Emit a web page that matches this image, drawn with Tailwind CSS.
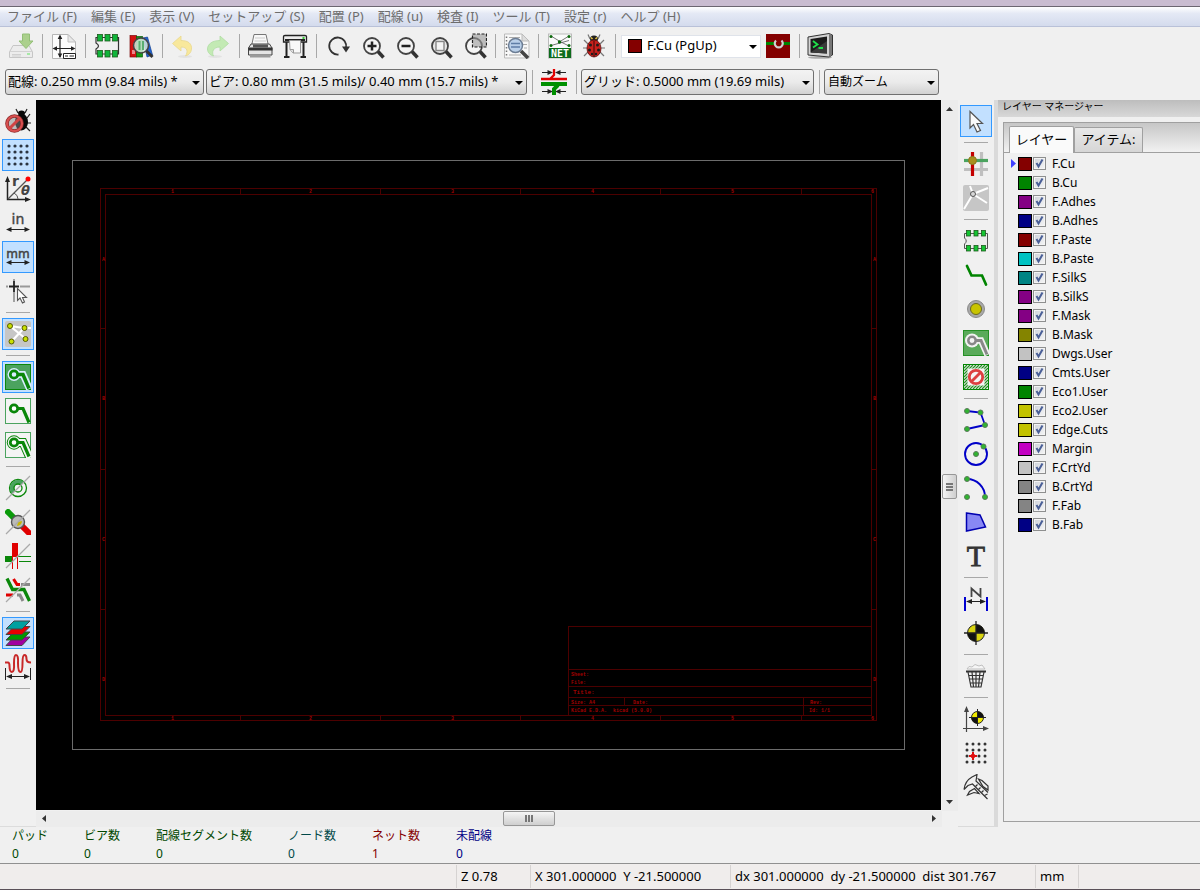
<!DOCTYPE html>
<html lang="ja">

<head>
  <meta charset="UTF-8">
  <meta name="viewport" content="width=device-width, initial-scale=1.0">
  <title>Pcbnew</title>
  <script src="https://cdn.jsdelivr.net/npm/@tailwindcss/browser@4"></script>
</head>

<body class="h-screen flex flex-col overflow-hidden bg-[#f0f0f0] text-black text-[13px] leading-4 font-['Noto_Sans','Noto_Sans_CJK_JP',sans-serif]">
  <!-- Window frame -->
  <div class="h-[7px] shrink-0 bg-[#c9bcd0] border-b border-[#6b6670]"></div>

  <!-- Menu bar -->
  <nav class="h-5 shrink-0 flex items-center gap-[14px] px-[7px] pb-[2px] whitespace-nowrap text-[#6d6d6d] bg-linear-to-b from-white via-[#e4e9f5] via-35% to-[#d4dbed] border-b border-[#b9c1d8]">
    <a href="#">ファイル (F)</a>
    <a href="#">編集 (E)</a>
    <a href="#">表示 (V)</a>
    <a href="#">セットアップ (S)</a>
    <a href="#">配置 (P)</a>
    <a href="#">配線 (u)</a>
    <a href="#">検査 (I)</a>
    <a href="#">ツール (T)</a>
    <a href="#">設定 (r)</a>
    <a href="#">ヘルプ (H)</a>
  </nav>

  <!-- Main toolbar -->
  <div class="h-[38px] shrink-0 flex items-center pl-1">
    <button class="w-[34px] h-[34px] grid place-items-center" aria-label="保存">
      <svg width="26" height="26" viewBox="0 0 26 26">
        <path d="M5 12.500H21L24.500 19V24.500H1.500V19Z" fill="#ececec" stroke="#c6c6c6"/>
        <path d="M1.500 18.500H24.500" stroke="#d2d2d2"/>
        <path d="M4 21.500H13M4 23H13" stroke="#d0d0d0"/>
        <rect x="19" y="20" width="3" height="2" fill="#a6e8a6"/>
        <path d="M14.500 1H21.500V8H25L18 15.500L11 8H14.500Z" fill="#abd08c" stroke="#93bf77"/>
      </svg>
    </button>
    <i class="w-[9px] h-6 flex justify-center"><b class="w-px h-6 bg-[#a8a8a8]"></b></i>
    <button class="w-[34px] h-[34px] grid place-items-center" aria-label="ページ設定">
      <svg width="26" height="26" viewBox="0 0 26 26">
        <path d="M1.500 1.500H17L24.500 9V25.500H1.500Z" fill="#fcfcfc" stroke="#b5b5b5"/>
        <path d="M17 1.500V9H24.500Z" fill="#e8e8e8" stroke="#c0c0c0"/>
        <path d="M9 3V24M3 15.500H23" stroke="#222" stroke-width="1.200"/>
        <path d="M9 1.500L6.700 6H11.300ZM9 25L6.700 20.500H11.300ZM1.500 15.500L6 13.200V17.800ZM24.500 15.500L20 13.200V17.800Z" fill="#222"/>
        <path d="M12.500 20.500H24.500V25.500H12.500Z" fill="#fff" stroke="#222"/>
        <path d="M14 23H17M18.500 23H23" stroke="#222"/>
      </svg>
    </button>
    <i class="w-[9px] h-6 flex justify-center"><b class="w-px h-6 bg-[#a8a8a8]"></b></i>
    <button class="w-[34px] h-[34px] grid place-items-center" aria-label="フットプリントエディター">
      <svg width="26" height="26" viewBox="0 0 26 26">
        <path d="M2 4.500H24.500V21H2V16Q7 13 2 10Z" fill="#f0f0f0" stroke="#333" stroke-width="1.200"/>
        <g fill="#0fb53a" stroke="#1c5a1c" stroke-width=".8">
          <rect x="3.500" y="1.500" width="5" height="6.500"/><rect x="11" y="1.500" width="5" height="6.500"/><rect x="18.500" y="1.500" width="5" height="6.500"/>
          <rect x="3.500" y="17.500" width="5" height="6.500"/><rect x="11" y="17.500" width="5" height="6.500"/><rect x="18.500" y="17.500" width="5" height="6.500"/>
        </g>
      </svg>
    </button>
    <button class="w-[34px] h-[34px] grid place-items-center" aria-label="ライブラリブラウザー">
      <svg width="26" height="26" viewBox="0 0 26 26">
        <rect x="2" y="2.500" width="6.500" height="21.500" fill="#d31212" stroke="#7b0c0c" stroke-width=".7"/>
        <rect x="8.500" y="3.500" width="6" height="20.500" fill="#169a16" stroke="#0b5c0b" stroke-width=".7"/>
        <path d="M15 5L19.500 4L24.500 22L19 24Z" fill="#1d62d6" stroke="#123f8c" stroke-width=".7"/>
        <path d="M4 18H7M4 20H7" stroke="#fff"/>
        <circle cx="13" cy="12.500" r="7.500" fill="#d5e8dc" fill-opacity=".85" stroke="#444" stroke-width="1.500"/>
        <path d="M11.500 8V17M15 8V17" fill="none" stroke="#5aae72" stroke-width="2"/>
        <path d="M18.500 18L24.500 24" stroke="#333" stroke-width="3"/>
      </svg>
    </button>
    <i class="w-[9px] h-6 flex justify-center"><b class="w-px h-6 bg-[#a8a8a8]"></b></i>
    <button class="w-[34px] h-[34px] grid place-items-center" aria-label="元に戻す">
      <svg width="26" height="26" viewBox="0 0 26 26">
        <ellipse cx="14" cy="23.500" rx="7" ry="1.500" fill="#e2e2e2"/>
        <path d="M1.500 10.500L10 3V7.500C17.500 7.500 21 11 20.500 16C20.200 19.500 18 22 14.500 23C17 19 17 14 10 14V18Z" fill="#f8e89c" stroke="#e8d88e" stroke-width=".8"/>
      </svg>
    </button>
    <button class="w-[34px] h-[34px] grid place-items-center" aria-label="やり直す">
      <svg width="26" height="26" viewBox="0 0 26 26">
        <ellipse cx="10" cy="23.500" rx="7" ry="1.500" fill="#e2e2e2"/>
        <path d="M23.500 10.500L15 3V7.500C7.500 7.500 2.500 11 2.500 16C2.500 19.500 5 22 8.500 23C6.500 19 8 14 15 14V18Z" fill="#c3eab4" stroke="#aedca2" stroke-width=".8"/>
      </svg>
    </button>
    <i class="w-[9px] h-6 flex justify-center"><b class="w-px h-6 bg-[#a8a8a8]"></b></i>
    <button class="w-[34px] h-[34px] grid place-items-center" aria-label="印刷">
      <svg width="26" height="26" viewBox="0 0 26 26">
        <path d="M6 1.500H18L20.500 13H3.500Z" fill="#f8f8f8" stroke="#777"/>
        <path d="M7 5H17M6.500 8H18" stroke="#ccc"/>
        <path d="M3 11H21.500L24 15V22H.500V15Z" fill="#e4e4e4" stroke="#444"/>
        <path d="M.500 14.500H24.500V17.500H.500Z" fill="#333"/>
        <path d="M5 11.500H20V14.500H5Z" fill="#555"/>
        <path d="M2 22H22.500V24.500H2Z" fill="#9a9a9a"/>
      </svg>
    </button>
    <button class="w-[34px] h-[34px] grid place-items-center" aria-label="プロット">
      <svg width="26" height="26" viewBox="0 0 26 26">
        <path d="M1.500 3.500Q1.500 2.500 3 2.500H23Q24.500 2.500 24.500 3.500V9H1.500Z" fill="#ececec" stroke="#222" stroke-width="1.300"/>
        <path d="M3 7H23" stroke="#222" stroke-width="2"/>
        <rect x="20.500" y="4" width="2" height="2" fill="#3c3"/>
        <path d="M4.500 9V24M21.500 9V24" stroke="#222" stroke-width="2"/>
        <path d="M2 24H7.500M18.500 24H24" stroke="#222" stroke-width="2"/>
        <path d="M7.500 7.500H18.500V20H11L8 16.500Z" fill="#f8f8f8" stroke="#999"/>
        <path d="M8 16.500H11.500V20" fill="#ddd" stroke="#999"/>
      </svg>
    </button>
    <i class="w-[9px] h-6 flex justify-center"><b class="w-px h-6 bg-[#a8a8a8]"></b></i>
    <button class="w-[34px] h-[34px] grid place-items-center" aria-label="再描画">
      <svg width="26" height="26" viewBox="0 0 26 26">
        <path d="M13.500 21.500A8.500 8.500 0 1 1 21 15" fill="none" stroke="#333" stroke-width="1.800"/>
        <path d="M17 13.500H25L21 19.500Z" fill="#333"/>
      </svg>
    </button>
    <button class="w-[34px] h-[34px] grid place-items-center" aria-label="拡大">
      <svg width="26" height="26" viewBox="0 0 26 26">
        <circle cx="13" cy="13" r="8" fill="#f4f4f4" stroke="#444" stroke-width="1.800"/>
        <path d="M8.500 13H17.500M13 8.500V17.500" stroke="#222" stroke-width="2.500"/>
        <path d="M19 18.500L24.500 24.500" stroke="#333" stroke-width="3.500"/>
      </svg>
    </button>
    <button class="w-[34px] h-[34px] grid place-items-center" aria-label="縮小">
      <svg width="26" height="26" viewBox="0 0 26 26">
        <circle cx="13" cy="13" r="8" fill="#f4f4f4" stroke="#444" stroke-width="1.800"/>
        <path d="M8.500 13H17.500" stroke="#222" stroke-width="2.500"/>
        <path d="M19 18.500L24.500 24.500" stroke="#333" stroke-width="3.500"/>
      </svg>
    </button>
    <button class="w-[34px] h-[34px] grid place-items-center" aria-label="全体表示">
      <svg width="26" height="26" viewBox="0 0 26 26">
        <circle cx="13" cy="13" r="8" fill="#e8e8e8" stroke="#444" stroke-width="1.800"/>
        <rect x="9" y="8.500" width="8" height="9" fill="#f4f4f4" stroke="#888" stroke-width="1.400"/>
        <path d="M19 18.500L24.500 24.500" stroke="#333" stroke-width="3.500"/>
      </svg>
    </button>
    <button class="w-[34px] h-[34px] grid place-items-center" aria-label="選択範囲を拡大">
      <svg width="26" height="26" viewBox="0 0 26 26">
        <circle cx="13" cy="13" r="8" fill="#f4f4f4" stroke="#444" stroke-width="1.800"/>
        <rect x="11.500" y="1" width="14" height="13" fill="#9a9a9a" fill-opacity=".6" stroke="#222" stroke-width="1.200" stroke-dasharray="3 1.500"/>
        <path d="M19 18.500L24.500 24.500" stroke="#333" stroke-width="3.500"/>
      </svg>
    </button>
    <i class="w-[9px] h-6 flex justify-center"><b class="w-px h-6 bg-[#a8a8a8]"></b></i>
    <button class="w-[34px] h-[34px] grid place-items-center" aria-label="検索">
      <svg width="26" height="26" viewBox="0 0 26 26">
        <path d="M.500 1H18L25 8V25H.500Z" fill="#f8f8f8" stroke="#bbb"/>
        <path d="M18 1V8H25Z" fill="#ddd" stroke="#bbb"/>
        <path d="M2.500 3.500V24" stroke="#777" stroke-width="1.500" stroke-dasharray="1.500 2"/>
        <path d="M5 4.500H16M5 22H17M19 11.500H23M20 15H23" stroke="#aaa"/>
        <circle cx="11.500" cy="12.500" r="7" fill="#b9cfe8" stroke="#6c7d94" stroke-width="1.500"/>
        <path d="M7 10.500H16M7 14H16" stroke="#5f7ea6" stroke-width="1.500"/>
        <path d="M17 18L24 25" stroke="#444" stroke-width="3.500"/>
      </svg>
    </button>
    <i class="w-[9px] h-6 flex justify-center"><b class="w-px h-6 bg-[#a8a8a8]"></b></i>
    <button class="w-[34px] h-[34px] grid place-items-center" aria-label="ネットリスト">
      <svg width="26" height="26" viewBox="0 0 26 26" class="overflow-visible">
        <rect x="1.500" y="1" width="23" height="24" fill="#fafafa" stroke="#bbb"/>
        <path d="M4 3L13 8.500L22 3M4 12.500L22 7.500M13 8.500L22 13" fill="none" stroke="#555" stroke-width=".8"/>
        <g fill="#0d6b0d"><circle cx="4" cy="3.500" r="1.500"/><circle cx="22" cy="3.500" r="1.500"/><circle cx="12.500" cy="9" r="1.700"/><circle cx="4" cy="12.500" r="1.500"/><circle cx="22" cy="12.500" r="1.500"/></g>
        <rect x="2" y="15" width="22" height="10" fill="#0d6b1b"/>
        <text x="13" y="23.500" text-anchor="middle" fill="#fff" font-family="DejaVu Sans Mono" font-weight="bold" font-size="10">NET</text>
      </svg>
    </button>
    <button class="w-[34px] h-[34px] grid place-items-center" aria-label="DRC">
      <svg width="26" height="26" viewBox="0 0 26 26">
        <path d="M9 6L7 1.500M17 6L19 1.500M7 11L3 7M19 11L23 7M6 15H2M20 15H24M7 19L3 23M19 19L23 23" stroke="#777" stroke-width="1.200" fill="none"/>
        <ellipse cx="13" cy="6" rx="4" ry="3.500" fill="#222"/>
        <path d="M10 4.500L11.500 6M16 4.500L14.500 6" stroke="#e8c23a" stroke-width="1.500"/>
        <ellipse cx="13" cy="15.500" rx="7" ry="8.500" fill="#c8201c" stroke="#5e0d0d" stroke-width=".8"/>
        <path d="M13 8V24" stroke="#3a0808"/>
        <g fill="#1c1c1c"><circle cx="9.500" cy="12" r="1.500"/><circle cx="16.500" cy="12" r="1.500"/><circle cx="8.500" cy="17" r="1.500"/><circle cx="17.500" cy="17" r="1.500"/><circle cx="11" cy="21" r="1.200"/><circle cx="15" cy="21" r="1.200"/></g>
      </svg>
    </button>
    <i class="w-[9px] h-6 flex justify-center"><b class="w-px h-6 bg-[#a8a8a8]"></b></i>
    <div class="relative w-[140px] ml-px">
      <div class="absolute left-[7px] top-1 w-[14px] h-[14px] bg-[#840000] border border-black pointer-events-none"></div>
      <select class="appearance-none block w-full h-[23px] pl-[25px] pb-[2px] bg-white border border-[#dfe3ea]" aria-label="レイヤー">
        <option>F.Cu (PgUp)</option>
        <option>B.Cu (PgDn)</option>
      </select>
      <svg class="absolute right-1 top-[10px] pointer-events-none" width="8" height="4"><path d="M0 0H8L4 4Z"/></svg>
    </div>
    <button class="w-[34px] h-[34px] grid place-items-center" aria-label="レイヤーペア">
      <svg width="26" height="26" viewBox="0 0 26 26">
        <rect x="1" y="1" width="24" height="24" fill="#840000"/>
        <path d="M1 10.500H9M18 10.500H25" stroke="#008400" stroke-width="3"/>
        <path d="M11 7.500A4 4 0 1 0 16.500 7.500" fill="none" stroke="#d0d0d0" stroke-width="2.200"/>
      </svg>
    </button>
    <i class="w-2 h-6 flex justify-center"><b class="w-px h-6 bg-[#a8a8a8]"></b></i>
    <button class="w-[34px] h-[34px] grid place-items-center" aria-label="スクリプトコンソール">
      <svg width="26" height="26" viewBox="0 0 26 26">
        <ellipse cx="13" cy="24.500" rx="12" ry="1.300" fill="#aaa"/>
        <path d="M1 4L22 .5L25.500 2V22L22 24L1 22Z" fill="#d4d4d4" stroke="#333"/>
        <path d="M22 1V24L25 22V2Z" fill="#777"/>
        <path d="M3.500 6L20 3.500V20.500L3.500 19.500Z" fill="#1c1c1c"/>
        <path d="M3.500 19.500L20 8V20.500Z" fill="#3a3a3a"/>
        <path d="M6 8L10.500 11.500L6 14.500M11.500 15H16" fill="none" stroke="#1fe04a" stroke-width="1.800"/>
      </svg>
    </button>
  </div>

  <!-- Track / via / grid toolbar -->
  <div class="h-[35px] shrink-0 flex items-center pl-[5px] pb-px">
    <div class="relative w-[199px]">
      <select class="appearance-none block w-full h-[26px] pl-[2px] pb-[2px] rounded-[3px] border border-[#707070] bg-linear-to-b from-[#f3f3f3] via-[#ebebeb] to-[#d2d2d2]" aria-label="配線幅">
        <option>配線: 0.250 mm (9.84 mils) *</option>
      </select>
      <svg class="absolute right-1 top-3 pointer-events-none" width="8" height="4"><path d="M0 0H8L4 4Z"/></svg>
    </div>
    <div class="relative w-[321px] ml-[2px]">
      <select class="appearance-none block w-full h-[26px] pl-[2px] pb-[2px] rounded-[3px] border border-[#707070] bg-linear-to-b from-[#f3f3f3] via-[#ebebeb] to-[#d2d2d2]" aria-label="ビアサイズ">
        <option>ビア: 0.80 mm (31.5 mils)/ 0.40 mm (15.7 mils) *</option>
      </select>
      <svg class="absolute right-1 top-3 pointer-events-none" width="8" height="4"><path d="M0 0H8L4 4Z"/></svg>
    </div>
    <i class="w-[10px] h-6 flex justify-center"><b class="w-px h-6 bg-[#a8a8a8]"></b></i>
    <button class="w-[34px] h-[34px] grid place-items-center" aria-label="自動配線幅">
      <svg width="26" height="26" viewBox="0 0 26 26">
        <path d="M1 3.500H11M15 3.500H25M1 22.500H11M15 22.500H25" stroke="#222"/>
        <path d="M12 3.500L6.500 1V6ZM14 3.500L19.500 1V6ZM12 22.500L6.500 20V25ZM14 22.500L19.500 20V25Z" fill="#222"/>
        <path d="M0 10H26M9 10L13 6V0" stroke="#e00000" stroke-width="2.300" fill="none"/>
        <path d="M0 15H26" stroke="#009000" stroke-width="4"/>
        <path d="M17 16L13 20V26" fill="none" stroke="#009000" stroke-width="4"/>
      </svg>
    </button>
    <i class="w-[10px] h-6 flex justify-center"><b class="w-px h-6 bg-[#a8a8a8]"></b></i>
    <div class="relative w-[233px]">
      <select class="appearance-none block w-full h-[26px] pl-[2px] pb-[2px] rounded-[3px] border border-[#707070] bg-linear-to-b from-[#f3f3f3] via-[#ebebeb] to-[#d2d2d2]" aria-label="グリッド">
        <option>グリッド: 0.5000 mm (19.69 mils)</option>
      </select>
      <svg class="absolute right-1 top-3 pointer-events-none" width="8" height="4"><path d="M0 0H8L4 4Z"/></svg>
    </div>
    <i class="w-[10px] h-6 flex justify-center"><b class="w-px h-6 bg-[#a8a8a8]"></b></i>
    <div class="relative w-[115px]">
      <select class="appearance-none block w-full h-[26px] pl-[3px] rounded-[3px] border border-[#707070] bg-linear-to-b from-[#f3f3f3] via-[#ebebeb] to-[#d2d2d2] text-xs" aria-label="ズーム">
        <option>自動ズーム</option>
      </select>
      <svg class="absolute right-1 top-3 pointer-events-none" width="8" height="4"><path d="M0 0H8L4 4Z"/></svg>
    </div>
  </div>

  <div class="flex-1 min-h-0 flex">
    <!-- Left toolbar -->
    <aside class="w-9 shrink-0 flex flex-col items-center pt-1 border-b border-[#dcdcdc]">
      <button class="w-8 h-8 my-px grid place-items-center" aria-label="DRCオフ">
        <svg width="26" height="26" viewBox="0 0 26 26">
          <path d="M13 5L11 1M20 5L22 1M22 10L25 6M22 15H26M21 19L25 23" stroke="#222" stroke-width="1.200"/>
          <ellipse cx="16.500" cy="14" rx="6.500" ry="8.500" fill="#0a0a0a"/>
          <ellipse cx="16.500" cy="5" rx="3.500" ry="2.500" fill="#0a0a0a"/>
          <circle cx="9.500" cy="15.500" r="7.500" fill="#888" fill-opacity=".5" stroke="#8b2b2b" stroke-width="3.600"/>
          <circle cx="9.500" cy="15.500" r="7.500" fill="none" stroke="#d85050" stroke-width="2.200"/>
          <path d="M4.500 20.500L14.500 10.500" stroke="#d04545" stroke-width="3"/>
        </svg>
      </button>
      <button class="w-8 h-8 my-px grid place-items-center border border-[#3399ff] bg-[#c2e0ff]" aria-label="グリッド表示">
        <svg width="26" height="26" viewBox="0 0 26 26">
          <g stroke="#2b3440" stroke-width="3.200" stroke-linecap="round" stroke-dasharray="0 6">
            <path d="M4 4H23"/><path d="M4 10H23"/><path d="M4 16H23"/><path d="M4 22H23"/>
          </g>
        </svg>
      </button>
      <button class="w-8 h-8 my-px grid place-items-center" aria-label="極座標">
        <svg width="26" height="26" viewBox="0 0 26 26" class="overflow-visible">
          <path d="M2.500 3V23.500H22" fill="none" stroke="#222" stroke-width="1.500"/>
          <path d="M2.500 0L0 6H5ZM26 23.500L20 21V26Z" fill="#222"/>
          <path d="M3 23L22 4" stroke="#555" stroke-width="1.300"/>
          <path d="M9 17Q13 19 13 23" fill="none" stroke="#555"/>
          <circle cx="23" cy="3" r="2.500" fill="#f00"/>
          <text x="7" y="10" font-family="DejaVu Sans" font-weight="bold" font-size="14" fill="#444">r</text>
          <text x="16" y="19" font-family="DejaVu Sans" font-weight="bold" font-style="italic" font-size="13" fill="#444">θ</text>
        </svg>
      </button>
      <button class="w-8 h-8 my-px grid place-items-center" aria-label="インチ">
        <svg width="26" height="26" viewBox="0 0 26 26" class="overflow-visible">
          <text x="13" y="14" text-anchor="middle" font-family="DejaVu Sans" font-size="14" fill="#444" stroke="#444" stroke-width=".4">in</text>
          <path d="M3 19.500H23" stroke="#222"/><path d="M1 19.500L6.500 17V22ZM25 19.500L19.500 17V22Z" fill="#222"/>
        </svg>
      </button>
      <button class="w-8 h-8 my-px grid place-items-center border border-[#3399ff] bg-[#c2e0ff]" aria-label="ミリメートル">
        <svg width="26" height="26" viewBox="0 0 26 26" class="overflow-visible">
          <text x="13" y="14" text-anchor="middle" font-family="DejaVu Sans" font-size="12" fill="#444" stroke="#444" stroke-width=".5">mm</text>
          <path d="M3 18.500H23" stroke="#222"/><path d="M1 18.500L6.500 16V21ZM25 18.500L19.500 16V21Z" fill="#222"/>
        </svg>
      </button>
      <button class="w-8 h-8 my-px grid place-items-center" aria-label="カーソル形状">
        <svg width="26" height="26" viewBox="0 0 26 26">
          <path d="M9 1V3M9 14V24M1 8.500H3M15 8.500H25" stroke="#999" stroke-width="1.800"/>
          <path d="M9 3V14M4 8.500H14" stroke="#222" stroke-width="1.800"/>
          <path d="M12.500 10.500V22.500L15 20L17.500 25L19.500 24L17.500 19.500H21.500Z" fill="#fff" stroke="#555" stroke-width="1.100"/>
        </svg>
      </button>
      <hr class="w-6 h-px my-1 border-0 bg-[#a8a8a8]">
      <button class="w-8 h-8 my-px grid place-items-center border border-[#3399ff] bg-[#c2e0ff]" aria-label="ラッツネスト">
        <svg width="26" height="26" viewBox="0 0 26 26">
          <rect width="26" height="26" rx="2" fill="#c6c6c6"/>
          <path d="M5 5L19 7H26M5 5L21 18M19 7L7 20" stroke="#fff" stroke-width="2.200" fill="none"/>
          <g fill="#c9e000" stroke="#555b00"><circle cx="5" cy="5" r="2.500"/><circle cx="19.500" cy="7" r="2.500"/><circle cx="6.500" cy="20.500" r="2.500"/><circle cx="20.500" cy="18" r="2.500"/></g>
        </svg>
      </button>
      <hr class="w-6 h-px my-1 border-0 bg-[#a8a8a8]">
      <button class="w-8 h-8 my-px grid place-items-center border border-[#3399ff] bg-[#c2e0ff]" aria-label="塗りつぶし表示">
        <svg width="26" height="26" viewBox="0 0 26 26">
          <rect x=".5" y=".5" width="25" height="25" fill="#4ba35f" stroke="#0a870a"/>
          <path d="M9 10.500H18L24.500 25" fill="none" stroke="#d8ecff" stroke-width="7"/>
          <circle cx="9" cy="10.500" r="6.500" fill="#d8ecff"/>
          <path d="M12 10.500H18L24 24.500" fill="none" stroke="#0a870a" stroke-width="3.500"/>
          <circle cx="9" cy="10.500" r="3.700" fill="#d8ecff" stroke="#0a870a" stroke-width="2.800"/>
        </svg>
      </button>
      <button class="w-8 h-8 my-px grid place-items-center" aria-label="塗りつぶし非表示">
        <svg width="26" height="26" viewBox="0 0 26 26">
          <rect x=".5" y=".5" width="25" height="25" fill="#f4f4f4" stroke="#4ba35f"/>
          <path d="M12 10.500H18L24 24.500" fill="none" stroke="#0a870a" stroke-width="3.200"/>
          <circle cx="9" cy="10.500" r="3.700" fill="#fff" stroke="#0a870a" stroke-width="2.800"/>
        </svg>
      </button>
      <button class="w-8 h-8 my-px grid place-items-center" aria-label="塗りつぶし外形">
        <svg width="26" height="26" viewBox="0 0 26 26">
          <rect x=".5" y=".5" width="25" height="25" fill="#f4f4f4" stroke="#4ba35f"/>
          <path d="M10 10.500H18L25 26" fill="none" stroke="#0a870a" stroke-width="9"/>
          <circle cx="9" cy="10.500" r="7.200" fill="#0a870a"/>
          <path d="M10 10.500H18L25 26" fill="none" stroke="#f4f4f4" stroke-width="7"/>
          <circle cx="9" cy="10.500" r="6.200" fill="#f4f4f4"/>
          <path d="M12 10.500H18L24 24.500" fill="none" stroke="#0a870a" stroke-width="3.200"/>
          <circle cx="9" cy="10.500" r="3.700" fill="#fff" stroke="#0a870a" stroke-width="2.800"/>
        </svg>
      </button>
      <hr class="w-6 h-px my-1 border-0 bg-[#a8a8a8]">
      <button class="w-8 h-8 my-px grid place-items-center" aria-label="パッド外形">
        <svg width="26" height="26" viewBox="0 0 26 26">
          <circle cx="13" cy="13" r="8.500" fill="#f4f4f4" stroke="#0a870a" stroke-width="1.300"/>
          <path d="M19 7A8.500 8.500 0 0 0 7 19Z" fill="#4ba35f"/>
          <circle cx="13" cy="13" r="4" fill="#f4f4f4" stroke="#0a870a" stroke-width="1.300"/>
          <path d="M1 25L25 1" stroke="#aaa" stroke-width="1.300"/>
        </svg>
      </button>
      <button class="w-8 h-8 my-px grid place-items-center" aria-label="ビア外形">
        <svg width="26" height="26" viewBox="0 0 26 26">
          <path d="M1 1L10 10" stroke="#0a9a0a" stroke-width="6"/>
          <path d="M16 16L26 26" stroke="#e00000" stroke-width="6"/>
          <circle cx="13" cy="13" r="6.500" fill="#bbb" stroke="#555" stroke-width="1.400"/>
          <path d="M17 12A5 5 0 0 1 12 17L13 13Z" fill="#c8b800"/>
          <path d="M1 25L25 1" stroke="#aaa" stroke-width="1.300"/>
        </svg>
      </button>
      <button class="w-8 h-8 my-px grid place-items-center" aria-label="配線外形">
        <svg width="26" height="26" viewBox="0 0 26 26">
          <path d="M0 16H7" stroke="#0a870a" stroke-width="6"/>
          <path d="M10 13.500H26M14 18.500H26" stroke="#0a870a"/>
          <path d="M10 0V14" stroke="#e00000" stroke-width="6"/>
          <path d="M7.500 14V26M12.500 14V26" stroke="#e00000"/>
          <path d="M1 25L25 1" stroke="#aaa" stroke-width="1.300"/>
        </svg>
      </button>
      <button class="w-8 h-8 my-px grid place-items-center" aria-label="ハイコントラスト">
        <svg width="26" height="26" viewBox="0 0 26 26">
          <path d="M8.500 2L12 7.500H15" fill="none" stroke="#e00000" stroke-width="3"/>
          <path d="M16 7.500H25M12 18H15L18 24" fill="none" stroke="#888" stroke-width="3"/>
          <path d="M1 18H8" stroke="#e00000" stroke-width="3"/>
          <path d="M2 1.500L7.500 12.500H19L24.500 24" fill="none" stroke="#0a870a" stroke-width="3.300"/>
          <path d="M1 25L25 1" stroke="#aaa" stroke-width="1.300"/>
        </svg>
      </button>
      <hr class="w-6 h-px my-1 border-0 bg-[#a8a8a8]">
      <button class="w-8 h-8 my-px grid place-items-center border border-[#3399ff] bg-[#c2e0ff]" aria-label="レイヤーマネージャー">
        <svg width="26" height="26" viewBox="0 0 26 26" stroke="#444">
          <path d="M1 25.500L9 17H25L17 25.500Z" fill="#a000a0"/>
          <path d="M1 20L9 12H25L17 20Z" fill="#009a00"/>
          <path d="M1 14.500L9 6.500H25L17 14.500Z" fill="#e80000"/>
          <path d="M1 9L9 1H25L17 9Z" fill="#00a0a0"/>
        </svg>
      </button>
      <button class="w-8 h-8 my-px grid place-items-center" aria-label="マイクロ波ツール">
        <svg width="26" height="26" viewBox="0 0 26 26">
          <path d="M0 8.500H3Q4.500 8.500 4.500 12Q4.500 18 7 18Q9.500 18 9 9Q9 1 11 1Q13.500 1 13 9Q13 18 15.500 18Q17.500 18 17.500 9Q17.500 1 19.500 1Q21.500 1 21.500 5Q21.500 8.500 26 8.500" fill="none" stroke="#c82828" stroke-width="2"/>
          <path d="M.5 14V26M25.500 14V26M3 22.500H23" stroke="#222"/>
          <path d="M1 22.500L7 20V25ZM25 22.500L19 20V25Z" fill="#222"/>
        </svg>
      </button>
      <hr class="w-6 h-px my-1 border-0 bg-[#a8a8a8]">
    </aside>

    <!-- Board canvas -->
    <main class="flex-1 min-w-0 flex flex-col">
      <div class="flex-1 min-h-0 mr-px bg-black">
        <svg class="w-full h-full" viewBox="0 0 905 710" shape-rendering="crispEdges">
          <rect x="36.500" y="60.500" width="832" height="589" fill="none" stroke="#6c6c6c"/>
          <g fill="none" stroke="#4c0000">
            <rect x="64.500" y="88.500" width="776" height="532"/>
            <rect x="69.500" y="94.500" width="766" height="521"/>
            <path d="M204.500 88V94M344.500 88V94M484.500 88V94M624.500 88V94M765.500 88V94"/>
            <path d="M204.500 615V621M344.500 615V621M484.500 615V621M624.500 615V621M765.500 615V621"/>
            <path d="M64 228.500H69M64 369.500H69M64 509.500H69M836 228.500H841M836 369.500H841M836 509.500H841"/>
            <path d="M532.500 615V526.500H835M532 569.500H835M532 586.500H835M532 597.500H835M532 605.500H835M588.500 597V605M767.500 597V615"/>
          </g>
          <g fill="#a00000" font-family="Liberation Mono" font-weight="bold" font-size="5">
            <text x="135" y="93">1</text><text x="273" y="93">2</text><text x="415" y="93">3</text><text x="555" y="93">4</text><text x="695" y="93">5</text><text x="835" y="93">6</text>
            <text x="135" y="620">1</text><text x="273" y="620">2</text><text x="415" y="620">3</text><text x="555" y="620">4</text><text x="695" y="620">5</text><text x="835" y="620">6</text>
            <text x="66" y="161">A</text><text x="66" y="300">B</text><text x="66" y="441">C</text><text x="66" y="581">D</text>
            <text x="837" y="161">A</text><text x="837" y="300">B</text><text x="837" y="441">C</text><text x="837" y="581">D</text>
            <text x="535" y="576">Sheet:</text>
            <text x="535" y="584">File:</text>
            <text x="537" y="594" font-size="6">Title:</text>
            <text x="535" y="604">Size: A4</text>
            <text x="597" y="604">Date:</text>
            <text x="774" y="604">Rev:</text>
            <text x="535" y="612" xml:space="preserve">KiCad E.D.A.  kicad (5.0.0)</text>
            <text x="773" y="612">Id: 1/1</text>
          </g>
        </svg>
      </div>
      <div class="h-4 mt-px shrink-0 flex items-center justify-between px-[6px] pb-px bg-[#ececec]">
        <svg width="4" height="7"><path d="M4 0V7L0 3.500Z" fill="#333"/></svg>
        <div class="w-[52px] h-[15px] ml-20 flex items-center justify-center gap-px rounded-xs border border-[#979797] bg-linear-to-b from-[#f5f5f5] to-[#cfcfcf]">
          <i class="w-[2px] h-[7px] bg-[#777]"></i><i class="w-[2px] h-[7px] bg-[#777]"></i><i class="w-[2px] h-[7px] bg-[#777]"></i>
        </div>
        <svg width="4" height="7"><path d="M0 0V7L4 3.500Z" fill="#333"/></svg>
      </div>
    </main>
    <div class="w-4 mb-4 pr-px shrink-0 flex flex-col items-center justify-between py-[7px] bg-[#ececec]">
      <svg width="7" height="4"><path d="M0 4H7L3.500 0Z" fill="#333"/></svg>
      <div class="w-[15px] h-[25px] mt-[62px] flex flex-col items-center justify-center gap-px rounded-xs border border-[#979797] bg-linear-to-r from-[#f5f5f5] to-[#cfcfcf]">
        <i class="w-[7px] h-[2px] bg-[#777]"></i><i class="w-[7px] h-[2px] bg-[#777]"></i><i class="w-[7px] h-[2px] bg-[#777]"></i>
      </div>
      <svg width="7" height="4"><path d="M0 0H7L3.500 4Z" fill="#333"/></svg>
    </div>

    <!-- Right toolbar -->
    <aside class="w-10 shrink-0 flex flex-col items-center pt-1 border-r-4 border-b border-[#dadada]">
      <button class="w-8 h-8 my-px grid place-items-center border border-[#3399ff] bg-[#c2e0ff]" aria-label="選択">
        <svg width="26" height="26" viewBox="0 0 26 26">
          <path d="M7 3.500V20L10.500 16.500L14 24L17.500 22.500L14 15.500H19.500Z" fill="#fafafa" stroke="#555" stroke-width="1.200"/>
        </svg>
      </button>
      <hr class="w-6 h-px my-1 border-0 bg-[#a8a8a8]">
      <button class="w-8 h-8 my-px grid place-items-center" aria-label="ネットをハイライト">
        <svg width="26" height="26" viewBox="0 0 26 26">
          <path d="M18.500 1V25M1 18.500H25" stroke="#bfbfbf" stroke-width="3.200"/>
          <path d="M9.500 1V25" stroke="#c40000" stroke-width="3.200"/>
          <path d="M1 9.500H25" stroke="#4ba35f" stroke-width="3.200"/>
          <circle cx="9.500" cy="9.500" r="4" fill="#a89020" stroke="#8a7a20"/>
        </svg>
      </button>
      <button class="w-8 h-8 my-px grid place-items-center" aria-label="ローカルラッツネスト">
        <svg width="26" height="26" viewBox="0 0 26 26">
          <rect width="26" height="26" rx="2" fill="#c6c6c6"/>
          <path d="M10 9L7 1M10 9L25 3M10 9L24 18M10 9L1 24" stroke="#fff" stroke-width="2"/>
          <circle cx="10" cy="9" r="2.500" fill="#d8d8d8" stroke="#555"/>
        </svg>
      </button>
      <hr class="w-6 h-px my-1 border-0 bg-[#a8a8a8]">
      <button class="w-8 h-8 my-px grid place-items-center" aria-label="フットプリントを追加">
        <svg width="26" height="26" viewBox="0 0 26 26">
          <path d="M1.500 5.500H24.500V20.500H1.500V16Q5 13 1.500 10Z" fill="#ececec" stroke="#555"/>
          <g fill="#14c432" stroke="#1c5a1c" stroke-width=".8">
            <rect x="3.500" y="2.500" width="4" height="5.500"/><rect x="11" y="2.500" width="4" height="5.500"/><rect x="18.500" y="2.500" width="4" height="5.500"/>
            <rect x="3.500" y="17.500" width="4" height="5.500"/><rect x="11" y="17.500" width="4" height="5.500"/><rect x="18.500" y="17.500" width="4" height="5.500"/>
          </g>
        </svg>
      </button>
      <button class="w-8 h-8 my-px grid place-items-center" aria-label="配線">
        <svg width="26" height="26" viewBox="0 0 26 26">
          <path d="M4 4L8.500 13.500H19L23 22.500" fill="none" stroke="#008400" stroke-width="2.700" stroke-linecap="round"/>
        </svg>
      </button>
      <button class="w-8 h-8 my-px grid place-items-center" aria-label="ビア">
        <svg width="26" height="26" viewBox="0 0 26 26">
          <circle cx="13" cy="13" r="8.500" fill="#a8a8a8" stroke="#8a8a8a"/>
          <circle cx="13" cy="13" r="5.500" fill="#c8c400" stroke="#6a6820"/>
        </svg>
      </button>
      <button class="w-8 h-8 my-px grid place-items-center" aria-label="ゾーン">
        <svg width="26" height="26" viewBox="0 0 26 26">
          <rect x=".5" y=".5" width="25" height="25" fill="#5aaa5a" stroke="#259025"/>
          <path d="M9 10.500H18L24.500 25" fill="none" stroke="#f2f2f2" stroke-width="6.500"/>
          <circle cx="9" cy="10.500" r="7" fill="#f2f2f2"/>
          <path d="M12 10.500H18L24 24.500" fill="none" stroke="#888" stroke-width="3"/>
          <circle cx="9" cy="10.500" r="3.700" fill="#f2f2f2" stroke="#888" stroke-width="2.500"/>
        </svg>
      </button>
      <button class="w-8 h-8 my-px grid place-items-center" aria-label="キープアウト">
        <svg width="26" height="26" viewBox="0 0 26 26">
          <rect x=".5" y=".5" width="25" height="25" fill="#f4f4f4" stroke="#008400"/>
          <path d="M1 4L4 1M1 7L7 1M1 10L10 1M1 13L13 1M1 16L16 1M1 19L19 1M1 22L22 1M1 25L25 1M4 25L25 4M7 25L25 7M10 25L25 10M13 25L25 13M16 25L25 16M19 25L25 19M22 25L25 22" stroke="#259025" stroke-width="1.200"/>
          <rect x="4.500" y="4.500" width="17" height="17" fill="#f4f4f4"/>
          <circle cx="13" cy="13" r="6.700" fill="none" stroke="#dc4040" stroke-width="2.800"/>
          <path d="M8.500 17.500L17.500 8.500" stroke="#dc4040" stroke-width="2.800"/>
        </svg>
      </button>
      <hr class="w-6 h-px my-1 border-0 bg-[#a8a8a8]">
      <button class="w-8 h-8 my-px grid place-items-center" aria-label="線">
        <svg width="26" height="26" viewBox="0 0 26 26">
          <path d="M4 4L17.500 5.500L22 18L4 22" fill="none" stroke="#0000c8" stroke-width="1.800"/>
          <g fill="#2fb52f" stroke="#5a7a5a"><circle cx="4" cy="4" r="2.500"/><circle cx="17.500" cy="5.500" r="2.500"/><circle cx="22" cy="18" r="2.500"/><circle cx="4" cy="22" r="2.500"/></g>
        </svg>
      </button>
      <button class="w-8 h-8 my-px grid place-items-center" aria-label="円">
        <svg width="26" height="26" viewBox="0 0 26 26">
          <circle cx="13" cy="13" r="11" fill="none" stroke="#0000c8" stroke-width="1.900"/>
          <g fill="#2fb52f" stroke="#5a7a5a"><circle cx="13" cy="13" r="2.500"/><circle cx="20.500" cy="5.500" r="2.500"/></g>
        </svg>
      </button>
      <button class="w-8 h-8 my-px grid place-items-center" aria-label="円弧">
        <svg width="26" height="26" viewBox="0 0 26 26">
          <path d="M4 4A18 18 0 0 1 22 22" fill="none" stroke="#0000c8" stroke-width="1.900"/>
          <g fill="#2fb52f" stroke="#5a7a5a"><circle cx="4" cy="4" r="2.500"/><circle cx="22" cy="22" r="2.500"/><circle cx="4" cy="22" r="2.500"/></g>
        </svg>
      </button>
      <button class="w-8 h-8 my-px grid place-items-center" aria-label="ポリゴン">
        <svg width="26" height="26" viewBox="0 0 26 26">
          <path d="M3.500 4L17 6L22.500 18L3.500 22Z" fill="#8888f4" stroke="#0000b0" stroke-width="1.500"/>
        </svg>
      </button>
      <button class="w-8 h-8 my-px grid place-items-center" aria-label="テキスト">
        <svg width="26" height="26" viewBox="0 0 26 26" class="overflow-visible">
          <text x="13" y="23" text-anchor="middle" font-family="Liberation Serif" font-size="30" fill="#333" stroke="#333" stroke-width=".8">T</text>
        </svg>
      </button>
      <hr class="w-6 h-px my-1 border-0 bg-[#a8a8a8]">
      <button class="w-8 h-8 my-px grid place-items-center" aria-label="寸法線">
        <svg width="26" height="26" viewBox="0 0 26 26">
          <path d="M8.500 11V2.500L17.500 10.500V2" fill="none" stroke="#444" stroke-width="1.800"/>
          <path d="M2 11V25M24 11V25" stroke="#0000d0" stroke-width="2"/>
          <path d="M4 15.500H22" stroke="#222"/><path d="M3 15.500L9 13V18ZM23 15.500L17 13V18Z" fill="#222"/>
        </svg>
      </button>
      <button class="w-8 h-8 my-px grid place-items-center" aria-label="層合わせマーク">
        <svg width="26" height="26" viewBox="0 0 26 26">
          <circle cx="13" cy="13" r="8.500" fill="#d8d410" stroke="#222"/>
          <path d="M13 13V4.500A8.500 8.500 0 0 1 21.500 13ZM13 13V21.500A8.500 8.500 0 0 1 4.500 13Z" fill="#111"/>
          <path d="M13 1V25M1 13H25" stroke="#222" stroke-width="1.300"/>
        </svg>
      </button>
      <hr class="w-6 h-px my-1 border-0 bg-[#a8a8a8]">
      <button class="w-8 h-8 my-px grid place-items-center" aria-label="削除">
        <svg width="26" height="26" viewBox="0 0 26 26">
          <path d="M4 6L6 3.500L9 4L12 1.500L16 3L19 2L22 6Z" fill="#f6f6f6" stroke="#c0c0c0"/>
          <path d="M3 8.500H23" stroke="#333" stroke-width="2"/>
          <path d="M5 9L8 24H18L21 9M9 9L10.500 24M13 9V24M17 9L15.500 24M5.500 12.500H20.500M6 16H20M7 20H19" fill="none" stroke="#333" stroke-width="1.200"/>
        </svg>
      </button>
      <hr class="w-6 h-px my-1 border-0 bg-[#a8a8a8]">
      <button class="w-8 h-8 my-px grid place-items-center" aria-label="ドリル原点">
        <svg width="26" height="26" viewBox="0 0 26 26">
          <path d="M3.500 4V26M0 22.500H22" stroke="#444" stroke-width="1.200"/>
          <path d="M3.500 0L1 6H6ZM26 22.500L20 20V25Z" fill="#444"/>
          <circle cx="14.500" cy="11.500" r="6" fill="#f0ea00" stroke="#222"/>
          <path d="M14.500 11.500V5.500A6 6 0 0 1 20.500 11.500ZM14.500 11.500V17.500A6 6 0 0 1 8.500 11.500Z" fill="#111"/>
          <path d="M14.500 3V20M6 11.500H23" stroke="#222"/>
        </svg>
      </button>
      <button class="w-8 h-8 my-px grid place-items-center" aria-label="グリッド原点">
        <svg width="26" height="26" viewBox="0 0 26 26">
          <g stroke="#333" stroke-width="3" stroke-linecap="round" stroke-dasharray="0 6"><path d="M4 4H23"/><path d="M4 10H23"/><path d="M4 16H23"/><path d="M4 22H23"/></g>
          <path d="M10 12V20M6 16H14" stroke="#e01010" stroke-width="2"/>
          <circle cx="10" cy="16" r="2.300" fill="#e01010"/>
        </svg>
      </button>
      <button class="w-8 h-8 my-px grid place-items-center" aria-label="計測">
        <svg width="26" height="26" viewBox="0 0 26 26" fill="none" stroke="#333" stroke-width="1.200">
          <path d="M1 15.500Q2 7 9 3L14 .5L13 7L25 18.500M1 15.500L5 11.500L9.500 10L24.500 25"/>
          <path d="M4.500 21L6.500 17.500L11.500 14.500L16 19.500L11 18.500ZM15.500 5L19 6.500L25 12V16L20 12.500Z"/>
          <path d="M12.500 12.500L14.500 10.500M15.500 15.500L17.500 13.500M18.500 18.500L20.500 16.500M21.500 21.500L24.500 20"/>
        </svg>
      </button>
    </aside>

    <!-- Layer manager -->
    <section class="w-[202px] shrink-0 flex flex-col">
      <h2 class="h-[17px] pl-1 text-[10px] leading-[13px] bg-linear-to-b from-[#bdbdbd] to-[#d8d8d8]">レイヤー マネージャー</h2>
      <div class="flex-1 min-h-0 mt-[5px] ml-[5px] mb-[5px] border border-r-0 border-[#a0a0a0]">
        <div class="h-[30px] pl-[5px] flex items-end bg-linear-to-b from-[#c6c6c6] to-[#f2f2f2] border-b border-[#a0a0a0]" role="tablist">
          <button class="w-[65px] h-[27px] -mb-px pb-[3px] rounded-t-xs border border-b-0 border-[#a0a0a0] bg-[#fafafa]" role="tab" aria-selected="true">レイヤー</button>
          <button class="w-[69px] h-[25px] pb-[3px] rounded-t-xs border border-b-0 border-[#a0a0a0] bg-linear-to-b from-[#e8e8e8] to-[#d6d6d6]" role="tab">アイテム:</button>
        </div>
        <ul id="layerList" class="pt-px text-xs leading-4">
          <!-- filled from the layers array -->
        </ul>
      </div>
    </section>
  </div>

  <!-- Message panel -->
  <dl class="h-9 shrink-0 flex gap-9 pl-3 text-xs leading-[18px] whitespace-nowrap">
    <div class="text-[#004800]"><dt>パッド</dt><dd>0</dd></div>
    <div class="text-[#004800]"><dt>ビア数</dt><dd>0</dd></div>
    <div class="text-[#004800]"><dt>配線セグメント数</dt><dd>0</dd></div>
    <div class="text-[#004848]"><dt>ノード数</dt><dd>0</dd></div>
    <div class="text-[#840000]"><dt>ネット数</dt><dd>1</dd></div>
    <div class="text-[#000084]"><dt>未配線</dt><dd>0</dd></div>
  </dl>

  <!-- Status bar -->
  <footer class="h-[27px] shrink-0 flex items-stretch py-px leading-[22px] whitespace-pre bg-[#f0edec] border-t border-t-[#909090] border-b border-b-[#5a5058]">
    <div class="w-[456px]"></div>
    <div class="w-[74px] pl-1 border-l border-[#d6d3d2]">Z 0.78</div>
    <div class="w-[200px] pl-1 border-l border-[#d6d3d2]">X 301.000000  Y -21.500000</div>
    <div class="w-[305px] pl-1 border-l border-[#d6d3d2]">dx 301.000000  dy -21.500000  dist 301.767</div>
    <div class="w-[43px] pl-1 border-l border-[#d6d3d2]">mm</div>
    <div class="flex-1 border-l border-[#d6d3d2]"></div>
  </footer>

  <script>
    const layers = [
      { name: "F.Cu", color: "#840000", active: true },
      { name: "B.Cu", color: "#008400" },
      { name: "F.Adhes", color: "#840084" },
      { name: "B.Adhes", color: "#000084" },
      { name: "F.Paste", color: "#840000" },
      { name: "B.Paste", color: "#00c2c2" },
      { name: "F.SilkS", color: "#008484" },
      { name: "B.SilkS", color: "#840084" },
      { name: "F.Mask", color: "#840084" },
      { name: "B.Mask", color: "#848400" },
      { name: "Dwgs.User", color: "#c2c2c2" },
      { name: "Cmts.User", color: "#000084" },
      { name: "Eco1.User", color: "#008400" },
      { name: "Eco2.User", color: "#c2c200" },
      { name: "Edge.Cuts", color: "#c2c200" },
      { name: "Margin", color: "#c200c2" },
      { name: "F.CrtYd", color: "#c2c2c2" },
      { name: "B.CrtYd", color: "#848484" },
      { name: "F.Fab", color: "#848484" },
      { name: "B.Fab", color: "#000084" },
    ];

    document.getElementById("layerList").innerHTML = layers.map((layer, i) => `
      <li class="h-[19px] flex items-center pl-[7px]">
        <svg width="5" height="9" class="${layer.active ? "" : "invisible"}"><path d="M0 0L5 4.500L0 9Z" fill="#4040ff"/></svg>
        <span class="w-[14px] h-[14px] ml-[2px] border border-black" style="background:${layer.color}"></span>
        <span class="relative w-[13px] h-[13px] ml-px">
          <input type="checkbox" id="layer${i}" checked class="peer appearance-none block w-[13px] h-[13px] border border-[#8e8f8f] bg-linear-to-br from-[#cfd3da] to-[#f6f6f6] shadow-[inset_0_0_0_1px_#f4f4f4]">
          <svg class="absolute inset-0 pointer-events-none invisible peer-checked:visible" width="13" height="13"><path d="M3.500 6L5.500 9.500L9.500 2.500" fill="none" stroke="#4a5f97" stroke-width="2"/></svg>
        </span>
        <label for="layer${i}" class="ml-[6px]">${layer.name}</label>
      </li>`).join("");
  </script>
</body>

</html>
